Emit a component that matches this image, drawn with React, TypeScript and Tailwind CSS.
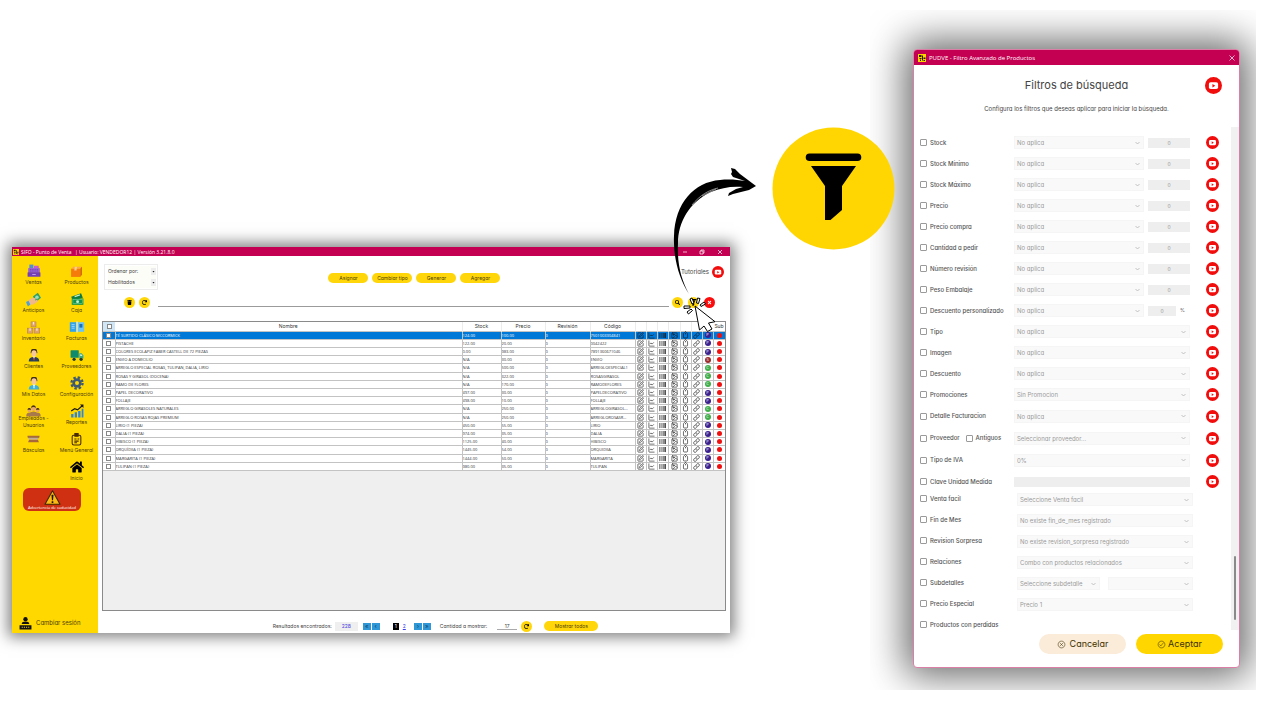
import type { ReactNode } from "react";
import { LuImage, LuSquarePen, LuChartLine, LuTag, LuLink } from "react-icons/lu";
import { FaTrash, FaSearch, FaHome, FaTimes, FaBarcode, FaRedo } from "react-icons/fa";
import { IoCheckmarkCircleOutline, IoCloseCircleOutline } from "react-icons/io5";

// ===== DATA =====

const products = [
  ["TÉ SURTIDO CLÁSICO MCCORMICK", "124.00", "100.00", "7501003304841", "P"],
  ["PISTACHE", "122.00", "20.00", "0042422", "P"],
  ["COLORES ECOLAPIZ FABER CASTELL DE 72 PIEZAS", "0.00", "983.00", "7891360671046", "P"],
  ["ENVIO A DOMICILIO", "N/A", "30.00", "ENVIO", "S"],
  ["ARREGLO ESPECIAL ROSAS, TULIPAN, DALIA, LIRIO", "N/A", "500.00", "ARREGLOESPECIAL1", "C"],
  ["ROSAS Y GIRASOL (DOCENA)", "N/A", "322.00", "ROSASGIRASOL", "C"],
  ["RAMO DE FLORES", "N/A", "170.00", "RAMODEFLORES", "C"],
  ["PAPEL DECORATIVO", "497.00", "30.00", "PAPELDECORATIVO", "P"],
  ["FOLLAJE", "498.00", "10.00", "FOLLAJE", "P"],
  ["ARREGLO GIRASOLES NATURALES", "N/A", "250.00", "ARREGLOGIRASOL...", "C"],
  ["ARREGLO ROSAS ROJAS PREMIUM", "N/A", "250.00", "ARREGLOROSASR...", "C"],
  ["LIRIO (1 PIEZA)", "450.00", "55.00", "LIRIO", "P"],
  ["DALIA (1 PIEZA)", "974.00", "35.00", "DALIA", "P"],
  ["HIBISCO (1 PIEZA)", "1125.00", "40.00", "HIBISCO", "P"],
  ["ORQUÍDEA (1 PIEZA)", "1445.00", "54.00", "ORQUIDEA", "P"],
  ["MARGARITA (1 PIEZA)", "1444.00", "50.00", "MARGARITA", "P"],
  ["TULIPAN (1 PIEZA)", "980.00", "35.00", "TULIPAN", "P"],
];

const typeColors: Record<string, string> = {
  P: "bg-[#3b1f8f]",
  S: "bg-[#9c2b2b]",
  C: "bg-[#3fae49]",
};

const numericFilters = [
  "Stock",
  "Stock Mínimo",
  "Stock Máximo",
  "Precio",
  "Precio compra",
  "Cantidad a pedir",
  "Número revisión",
  "Peso Embalaje",
];

// ===== SIDEBAR ICONS =====

function VentasIcon() {
  return (
    <svg viewBox="0 0 24 24" className="size-[14px]">
      <rect x="4" y="1" width="7" height="7" fill="#4f8fd8" />
      <rect x="12" y="3" width="8" height="5" fill="#c75ad0" />
      <rect x="2" y="7" width="20" height="8" rx="1" fill="#9a62d6" />
      <rect x="1" y="14" width="22" height="8" rx="1" fill="#7440b4" />
      <path d="M5 9.500h14M5 12h14" stroke="#5c35a0" strokeWidth="1" strokeDasharray="2 1" />
      <path d="M9 18h6" stroke="#c9a8ef" strokeWidth="1.500" />
    </svg>
  );
}

function ProductosIcon() {
  return (
    <svg viewBox="0 0 24 24" className="size-[13px]">
      <path d="M2 7l4-4h16l-3 4z" fill="#ffa54a" />
      <rect x="2" y="7" width="17" height="15" fill="#f57c0a" />
      <path d="M19 7l3-4v15l-3 4z" fill="#d45d05" />
      <path d="M9 3h4l-1 7H8z" fill="#ffd08a" />
    </svg>
  );
}

function AnticiposIcon() {
  return (
    <svg viewBox="0 0 24 24" className="size-[15px]">
      <path d="M11 7l8-6 5 8-8 7z" fill="#2f9e6b" />
      <circle cx="17.500" cy="8.500" r="2.800" fill="#9be0b8" />
      <path d="M3 14l7-5 6 1-2 4 4-2 1 3-7 5H7l-3 2z" fill="#f0b98a" />
      <path d="M0 16l4-2 3 6-4 3z" fill="#4f9fd6" />
    </svg>
  );
}

function CajaIcon() {
  return (
    <svg viewBox="0 0 24 24" className="size-[14px]">
      <path d="M2 8l17-6 3 8-17 5z" fill="#0f7a3f" />
      <rect x="3" y="11" width="20" height="11" fill="#12924a" />
      <rect x="5" y="13" width="16" height="7" fill="none" stroke="#7ed19c" />
      <circle cx="13" cy="16.500" r="2.500" fill="#c6f0d2" />
      <path d="M8 8l9-3" stroke="#c6f0d2" strokeWidth="2" />
    </svg>
  );
}

function InventarioIcon() {
  return (
    <svg viewBox="0 0 24 24" className="size-[15px]">
      <g fill="#e0a468" stroke="#b07a45" strokeWidth=".8">
        <rect x="8" y="3" width="8" height="8" />
        <rect x="2" y="13" width="9" height="8" />
        <rect x="13" y="13" width="9" height="8" />
      </g>
      <path d="M11 3h2v4h-2zM5.500 13h2v4h-2zM16.500 13h2v4h-2z" fill="#f9ead4" />
    </svg>
  );
}

function FacturasIcon() {
  return (
    <svg viewBox="0 0 24 20" className="h-[12px] w-[16px]">
      <rect x="0" y="2" width="11" height="16" fill="#35a3e8" />
      <rect x="13" y="2" width="11" height="16" fill="#6cc4f5" />
      <path d="M11 1h2v18h-2z" fill="#d7f0fd" />
      <path d="M3 6h5M3 9h5M3 12h5" stroke="#dff3fd" />
      <path d="M16 5h5v6h-5z" fill="#1d6fb0" />
    </svg>
  );
}

function PersonIcon({ shirt, tie }: { shirt: string; tie: string }) {
  return (
    <svg viewBox="0 0 24 24" className="size-[14px]">
      <path d="M6.500 9c-2-10 13-10 11 0z" fill="#3a2a20" />
      <ellipse cx="12" cy="9" rx="4.500" ry="5.500" fill="#f6c79b" />
      <path d="M7 6c2-3 8-3 10 0l-1-4H8z" fill="#3a2a20" />
      <path d="M3 23c0-6 4-7.500 9-7.500s9 1.500 9 7.500z" fill={shirt} />
      <path d="M9.500 14.500h5L12 19z" fill="#fff" />
      <path d="M11.300 16h1.400l.6 4-1.300 2-1.300-2z" fill={tie} />
    </svg>
  );
}

function ProveedoresIcon() {
  return (
    <svg viewBox="0 0 24 22" className="h-[13px] w-[14px]">
      <rect x="1" y="2" width="14" height="13" rx="1" fill="#0e8a6c" />
      <path d="M16 7h4l3 4v5h-7z" fill="#35a88a" />
      <circle cx="7" cy="17.500" r="2.800" fill="#203b36" />
      <circle cx="19" cy="17.500" r="2.800" fill="#203b36" />
      <path d="M17.500 9h2l2 3h-4z" fill="#cdeee6" />
    </svg>
  );
}

function ConfiguracionIcon() {
  return (
    <svg viewBox="0 0 24 24" className="size-[14px]">
      <circle cx="12" cy="12" r="8" fill="#3f5a73" />
      <circle cx="12" cy="12" r="9.500" fill="none" stroke="#3f5a73" strokeWidth="4" strokeDasharray="4.200 3.260" />
      <circle cx="12" cy="12" r="3.500" fill="#ffd800" />
    </svg>
  );
}

function EmpleadosIcon() {
  return (
    <svg viewBox="0 0 24 20" className="h-[12px] w-[15px]">
      <g fill="#e8a56e">
        <circle cx="5" cy="9" r="3" />
        <circle cx="19" cy="9" r="3" />
        <circle cx="12" cy="6" r="4" />
      </g>
      <path d="M8 5c0-6 8-6 8 0-2-2-6-2-8 0zM2 8c0-4 6-4 6 0zM16 8c0-4 6-4 6 0z" fill="#4a3020" />
      <path d="M0 19c0-6 3-6 5-6s4-2 7-2 5 2 7 2 5 0 5 6z" fill="#a8794a" />
    </svg>
  );
}

function ReportesIcon() {
  return (
    <svg viewBox="0 0 24 24" className="size-[14px]">
      <path d="M2 17h4v6H2zM8 14h4v9H8zM14 12h4v11h-4zM20 8h3v15h-3z" fill="#2f86d8" />
      <path d="M2 12l6-4 5 2 8-7" fill="none" stroke="#161616" strokeWidth="2" />
      <path d="M17 1h6v6z" fill="#161616" />
    </svg>
  );
}

function BasculasIcon() {
  return (
    <svg viewBox="0 0 24 14" className="h-[8px] w-[13px]">
      <path d="M1 1h22v3H1zM4 8h16l2 5H2z" fill="#a8683c" />
      <path d="M3 4h18v4H3z" fill="#c9b4a4" />
      <path d="M2 4.500h20" stroke="#70452a" />
    </svg>
  );
}

function MenuIcon() {
  return (
    <svg viewBox="0 0 24 24" className="size-[13px]" fill="none" stroke="#4a2c00" strokeWidth="2">
      <rect x="4" y="4" width="16" height="18" rx="3" />
      <path d="M9 1h6v5H9z" fill="#4a2c00" />
      <path d="M8 11h4M8 15h8M8 18h5M14 11h3" />
    </svg>
  );
}

const menuItems: { label: string; icon: ReactNode }[] = [
  { label: "Ventas", icon: <VentasIcon /> },
  { label: "Productos", icon: <ProductosIcon /> },
  { label: "Anticipos", icon: <AnticiposIcon /> },
  { label: "Caja", icon: <CajaIcon /> },
  { label: "Inventario", icon: <InventarioIcon /> },
  { label: "Facturas", icon: <FacturasIcon /> },
  { label: "Clientes", icon: <PersonIcon shirt="#24405c" tie="#c0392b" /> },
  { label: "Proveedores", icon: <ProveedoresIcon /> },
  { label: "Mis Datos", icon: <PersonIcon shirt="#3fb1d6" tie="#bfe8f5" /> },
  { label: "Configuración", icon: <ConfiguracionIcon /> },
  { label: "Empleados - Usuarios", icon: <EmpleadosIcon /> },
  { label: "Reportes", icon: <ReportesIcon /> },
  { label: "Básculas", icon: <BasculasIcon /> },
  { label: "Menú General", icon: <MenuIcon /> },
];

// ===== SHARED PIECES =====

function AppLogo({ className }: { className: string }) {
  return (
    <svg viewBox="0 0 16 16" className={className}>
      <rect width="16" height="16" fill="#ffd500" />
      <path d="M2 2h5v4H2zM8 3h2v10H8zM3 8h4v2H3zM11 7h4v3h-4zM11 12h3v2h-3zM4 11h2v3H4z" fill="#2b1a00" />
    </svg>
  );
}

function VideoIcon({ className }: { className: string }) {
  return (
    <svg viewBox="0 0 24 24" className={className}>
      <circle cx="12" cy="12" r="12" fill="#f20d0d" />
      <rect x="5.500" y="7.500" width="13" height="9.500" rx="2.500" fill="#fff" />
      <path d="M10.500 9.800v5l4-2.500z" fill="#f20d0d" />
    </svg>
  );
}

function Chevron() {
  return (
    <svg
      viewBox="0 0 10 6"
      className="pointer-events-none absolute right-1 top-1/2 h-[3px] w-[5px] -translate-y-1/2"
      fill="none"
      stroke="#b5b5b5"
      strokeWidth="1.600"
    >
      <path d="M1 1l4 4 4-4" />
    </svg>
  );
}

function FilterSelect({ label, value, className = "" }: { label: string; value: string; className?: string }) {
  return (
    <div className={`relative ${className}`}>
      <select
        aria-label={label}
        className="block h-[13px] w-full appearance-none border border-[#f5f5f5] bg-[#f9f9f9] px-[2px] text-[6px] leading-[11px] text-[#9a9a9a]"
      >
        <option>{value}</option>
      </select>
      <Chevron />
    </div>
  );
}

function Tick({ label }: { label: string }) {
  return (
    <label className="flex items-center gap-[3px] whitespace-nowrap text-[6px] leading-[8px] font-medium text-[#555]">
      <input
        type="checkbox"
        className="size-[7px] shrink-0 appearance-none rounded-[1px] border border-[#9a9a9a] bg-white"
      />
      {label}
    </label>
  );
}

// ===== PRODUCTS WINDOW =====

function Sidebar() {
  return (
    <nav className="flex w-[86px] shrink-0 flex-col bg-[#ffd800] pt-[8px] text-[#4d4100]">
      <div className="grid grid-cols-2">
        {menuItems.map((item) => (
          <a key={item.label} href="#" className="flex h-[28px] flex-col items-center">
            <span className="flex h-[14px] items-center">{item.icon}</span>
            <span
              className={
                item.label.startsWith("Empleados")
                  ? "-mt-[3px] w-[34px] text-center text-[5px] leading-[7px]"
                  : "mt-[1px] whitespace-nowrap text-[5px] leading-[7px]"
              }
            >
              {item.label}
            </span>
          </a>
        ))}
        <a href="#" className="col-start-2 flex h-[28px] flex-col items-center">
          <FaHome className="size-[14px] text-black" />
          <span className="mt-[1px] text-[5px] leading-[7px]">Inicio</span>
        </a>
      </div>
      <button className="ml-[11px] flex h-[23px] w-[58px] flex-col items-center rounded-[6px] bg-[#d03012] pt-[2px] font-['Open_Sans',sans-serif] text-[4px] leading-[5px] text-white">
        <svg viewBox="0 0 24 22" className="h-[15px] w-[17px] shrink-0">
          <path d="M12 1l11 20H1z" fill="#fdb913" stroke="#3b2500" strokeWidth="1.500" strokeLinejoin="round" />
          <path d="M10.500 7h3l-.7 8h-1.600zM10.800 16.500h2.400v2.400h-2.400z" fill="#1a1200" />
        </svg>
        Advertencia de caducidad
      </button>
      <button className="mt-auto flex items-center gap-1 pb-[3px] pl-[7px] text-[6px] leading-[14px]">
        <svg viewBox="0 0 24 24" className="size-[13px]" fill="#111">
          <circle cx="12" cy="4" r="4" />
          <path d="M5 13c0-6 14-6 14 0zM1 15h22v8H1z" />
          <path d="M5 18h2v2H5zM9 18h2v2H9zM13 18h2v2h-2zM17 18h2v2h-2z" fill="#ffd800" />
        </svg>
        Cambiar sesión
      </button>
    </nav>
  );
}

function RoundButton({ label, children, red = false }: { label: string; children: ReactNode; red?: boolean }) {
  return (
    <button
      aria-label={label}
      className={`flex size-[11px] shrink-0 items-center justify-center rounded-full ${
        red ? "bg-[#fb0d0d] text-white" : "bg-[#ffd60a] text-black"
      }`}
    >
      {children}
    </button>
  );
}

const actionIcons = [
  { Icon: LuSquarePen, className: "size-[7px]" },
  { Icon: LuChartLine, className: "size-[7px]" },
  { Icon: FaBarcode, className: "size-[7px]" },
  { Icon: LuImage, className: "size-[7px]" },
  { Icon: LuTag, className: "size-[7px] rotate-45" },
  { Icon: LuLink, className: "size-[7px]" },
];

function ProductsTable() {
  return (
    <div className="min-h-0 flex-1 border border-[#8a8a8a] bg-[#efefef]">
      <table className="h-[149px] w-full table-fixed border-collapse bg-white font-['Open_Sans',sans-serif] text-[4px] leading-[5px] text-[#333]">
        <colgroup>
          <col className="w-[12px]" />
          <col />
          <col className="w-[39px]" />
          <col className="w-[44px]" />
          <col className="w-[45px]" />
          <col className="w-[45px]" />
          <col className="w-[11px]" />
          <col className="w-[11px]" />
          <col className="w-[11px]" />
          <col className="w-[12px]" />
          <col className="w-[11px]" />
          <col className="w-[11px]" />
          <col className="w-[11px]" />
          <col className="w-[12px]" />
        </colgroup>
        <thead>
          <tr className="h-[9px] font-['Inter',sans-serif] text-[5px]">
            <th className="bg-[#cfe6f7] p-0">
              <input
                type="checkbox"
                aria-label="Seleccionar todos"
                className="mx-auto block size-[5px] appearance-none border border-[#888] bg-white"
              />
            </th>
            {["Nombre", "Stock", "Precio", "Revisión", "Código"].map((name) => (
              <th key={name} className="border-r border-[#ececec] p-0 font-normal">
                {name}
              </th>
            ))}
            {actionIcons.map((_, i) => (
              <th key={i} className="border-r border-[#ececec] p-0" />
            ))}
            <th className="p-0" />
            <th className="p-0 font-normal">Sub</th>
          </tr>
        </thead>
        <tbody>
          {products.map(([name, stock, price, code, type], row) => (
            <tr key={code} className={row === 0 ? "bg-[#0078d7] text-white" : ""}>
              <td className="border border-l-0 border-[#c3c3c3] p-0">
                <input
                  type="checkbox"
                  aria-label={name}
                  className="mx-auto block size-[5px] appearance-none border border-[#888] bg-white"
                />
              </td>
              {[name, stock, price, "0", code].map((text, i) => (
                <td key={i} className="overflow-hidden whitespace-nowrap border border-[#c3c3c3] p-0">
                  {text}
                </td>
              ))}
              {actionIcons.map(({ Icon, className }, i) => (
                <td key={i} className="border border-[#c3c3c3] p-0 text-[#111]">
                  <Icon className={`mx-auto block ${className}`} />
                </td>
              ))}
              <td className="border border-[#c3c3c3] p-0">
                <span
                  className={`mx-auto flex size-[6px] items-center justify-center rounded-full text-[4px] leading-[6px] text-white ${typeColors[type]}`}
                >
                  {type}
                </span>
              </td>
              <td className="border border-r-0 border-[#c3c3c3] p-0">
                <span className="mx-auto block size-[5px] rounded-full bg-[#f01010]" />
              </td>
            </tr>
          ))}
        </tbody>
      </table>
    </div>
  );
}

function Pagination() {
  const arrow = "flex h-[7px] w-[8px] items-center justify-center bg-[#2f97d6] text-[6px] leading-[6px] text-[#0b3e66]";
  return (
    <div className="flex h-[22px] items-center justify-center pl-[43px] pt-[8px] text-[5px] leading-[7px] text-[#444]">
      <span className="pr-[3px]">Resultados encontrados:</span>
      <output className="mr-[5px] block h-[9px] w-[23px] bg-[#efefef] text-center leading-[9px] text-[#4a3fe0]">
        228
      </output>
      <div className="flex gap-px">
        <button className={arrow}>«</button>
        <button className={arrow}>‹</button>
      </div>
      <button className="ml-[13px] h-[7px] w-[6px] bg-black text-white">1</button>
      <a href="#" className="mx-[4px] text-[#3d3df0] underline">
        2
      </a>
      <div className="ml-[4px] flex gap-px">
        <button className={arrow}>›</button>
        <button className={arrow}>»</button>
      </div>
      <label htmlFor="page-size" className="ml-[9px]">
        Cantidad a mostrar:
      </label>
      <input
        id="page-size"
        defaultValue="17"
        className="ml-[10px] mr-[4px] h-[8px] w-[20px] border-b border-[#aaa] text-center"
      />
      <RoundButton label="Actualizar">
        <FaRedo className="size-[5px]" />
      </RoundButton>
      <button className="ml-[12px] h-[10px] w-[54px] rounded-full bg-[#ffd60a] text-[#4d4100]">
        Mostrar todos
      </button>
    </div>
  );
}

function ProductsWindow() {
  return (
    <section className="flex h-[386px] flex-col bg-white shadow-[0_0_14px_4px_rgba(0,0,0,0.5)]">
      <header className="flex h-[9px] shrink-0 items-center bg-[#c30052] font-['Open_Sans',sans-serif] text-[5px] leading-[8px] text-white">
        <AppLogo className="ml-px mr-[2px] size-[6px]" />
        <span className="w-[54px]">SIFO - Punto de Venta</span>
        <span>| Usuario: VENDEDOR12 | Versión 3.21.8.0</span>
        <svg viewBox="0 0 42 6" className="ml-auto mr-[6px] h-[6px] w-[42px]" fill="none" stroke="#fff" strokeWidth=".7">
          <path d="M1 3h4M18 2h3v3h-3zM19 2V1h3v3h-1M36 1l4 4M40 1l-4 4" />
        </svg>
      </header>
      <div className="flex min-h-0 flex-1">
        <Sidebar />
        <div className="flex min-w-0 flex-1 flex-col pl-1 pr-1">
          <div className="mt-[8px] flex h-[26px] items-center pl-[2px]">
            <div className="flex h-full w-[54px] flex-col justify-center border border-[#ececec] pl-[3px]">
              {["Ordenar por:", "Habilitados"].map((text) => (
                <div key={text} className="relative w-[48px]">
                  <select
                    aria-label={text}
                    className="block h-[11px] w-full appearance-none bg-[#fdfdf8] text-[5px] leading-[11px] text-[#444]"
                  >
                    <option>{text}</option>
                  </select>
                  <svg
                    viewBox="0 0 5 7"
                    className="pointer-events-none absolute right-0 top-[2px] h-[7px] w-[5px]"
                  >
                    <rect width="5" height="7" fill="#ededed" />
                    <path d="M1.500 3h2L2.500 4.500z" fill="#222" />
                  </svg>
                </div>
              ))}
            </div>
            <div className="flex flex-1 items-center justify-center gap-[4px] pr-[10px] pt-[2px]">
              {["Asignar", "Cambiar tipo", "Generar", "Agregar"].map((text) => (
                <button
                  key={text}
                  className="h-[10px] w-[40px] rounded-full bg-[#ffd60a] text-[5px] leading-[10px] text-[#4d4100]"
                >
                  {text}
                </button>
              ))}
            </div>
            <a href="#" className="mb-[10px] flex items-center gap-[3px] pr-[2px] text-[6px] leading-[8px] text-[#444]">
              Tutoriales
              <VideoIcon className="size-[12px]" />
            </a>
          </div>
          <div className="mt-[7px] flex h-[11px] items-center pl-[22px] pr-[11px]">
            <RoundButton label="Eliminar">
              <FaTrash className="size-[5px]" />
            </RoundButton>
            <span className="w-[4px]" />
            <RoundButton label="Recargar">
              <FaRedo className="size-[5px]" />
            </RoundButton>
            <input
              aria-label="Buscar"
              className="ml-[8px] mr-[3px] h-[9px] min-w-0 flex-1 border-b border-[#9b9b9b] text-[6px]"
            />
            <div className="flex gap-[5px]">
              <RoundButton label="Buscar producto">
                <FaSearch className="size-[5px]" />
              </RoundButton>
              <RoundButton label="Filtrar">
                <svg viewBox="0 0 60 68" className="size-[7px]">
                  <path d="M2 0h56v9H2zM6 13h45L37 34v24L25 67h-5V34z" />
                </svg>
              </RoundButton>
              <RoundButton label="Limpiar" red>
                <FaTimes className="size-[5px]" />
              </RoundButton>
            </div>
          </div>
          <div className="mt-[13px] flex min-h-0 flex-1 flex-col">
            <ProductsTable />
          </div>
          <Pagination />
        </div>
      </div>
    </section>
  );
}

// ===== FILTERS WINDOW =====

function FilterRow({ label, children, video = true, tall = false }: {
  label: string;
  children?: ReactNode;
  video?: boolean;
  tall?: boolean;
}) {
  return (
    <div className={`flex items-center ${tall ? "h-[22px]" : "h-[21px]"}`}>
      <div className="flex w-[94px] shrink-0 gap-[6px]">
        <Tick label={label} />
        {label === "Proveedor" && <Tick label="Antiguos" />}
      </div>
      <div className="flex min-w-0 flex-1 items-center gap-[4px]">{children}</div>
      <div className="ml-[16px] w-[13px] shrink-0">
        {video && <VideoIcon className="size-[13px]" />}
      </div>
    </div>
  );
}

function FiltersWindow() {
  return (
    <section className="flex h-[619px] flex-col overflow-hidden rounded-[4px] border border-[#dc7fa6] bg-white shadow-[0_0_38px_8px_rgba(0,0,0,0.6)]">
      <header className="flex h-[15px] shrink-0 items-center bg-[#c30052] px-[4px] font-['Open_Sans',sans-serif] text-[6px] leading-[8px] text-white">
        <AppLogo className="mr-[3px] size-[8px]" />
        PUDVE - Filtro Avanzado de Productos
        <button aria-label="Cerrar" className="ml-auto">
          <svg viewBox="0 0 6 6" className="size-[6px]" fill="none" stroke="#fff" strokeWidth=".7">
            <path d="M.5 .5l5 5M5.500 .5l-5 5" />
          </svg>
        </button>
      </header>
      <div className="relative h-[62px] shrink-0 pt-[13px] text-center text-[#444]">
        <h1 className="text-[11px] leading-[14px]">Filtros de búsqueda</h1>
        <p className="mt-[13px] text-[6px] leading-[8px]">
          Configura los filtros que deseas aplicar para iniciar la búsqueda.
        </p>
        <VideoIcon className="absolute right-[17px] top-[12px] size-[17px]" />
      </div>
      <div className="flex h-[503px] shrink-0">
        <div className="min-w-0 flex-1 pl-[6px] pr-[12px] pt-[5px]">
          {numericFilters.map((label) => (
            <FilterRow key={label} label={label}>
              <FilterSelect label={label} value="No aplica" className="flex-1" />
              <input
                aria-label={`${label} valor`}
                defaultValue="0"
                className="h-[10px] w-[42px] bg-[#eee] text-center text-[5px] leading-[10px] text-[#999]"
              />
            </FilterRow>
          ))}
          <FilterRow label="Descuento personalizado">
            <FilterSelect label="Descuento personalizado" value="No aplica" className="flex-1" />
            <input
              aria-label="Porcentaje"
              defaultValue="0"
              className="h-[10px] w-[28px] bg-[#eee] text-center text-[5px] leading-[10px] text-[#999]"
            />
            <span className="w-[10px] text-[5px] text-[#555]">%</span>
          </FilterRow>
          {["Tipo", "Imagen", "Descuento", "Promociones"].map((label) => (
            <FilterRow key={label} label={label}>
              <FilterSelect
                label={label}
                value={label === "Promociones" ? "Sin Promocion" : "No aplica"}
                className="flex-1"
              />
            </FilterRow>
          ))}
          <FilterRow label="Detalle Facturacion" tall>
            <FilterSelect label="Detalle Facturacion" value="No aplica" className="flex-1" />
          </FilterRow>
          <FilterRow label="Proveedor" tall>
            <FilterSelect label="Proveedor" value="Seleccionar proveedor..." className="flex-1" />
          </FilterRow>
          <FilterRow label="Tipo de IVA" tall>
            <FilterSelect label="Tipo de IVA" value="0%" className="flex-1" />
          </FilterRow>
          <FilterRow label="Clave Unidad Medida">
            <input aria-label="Clave" className="h-[10px] w-full bg-[#eee] text-[5px]" />
          </FilterRow>
          {/* Second block sits a little closer and its fields are shifted right */}
          <div className="-mt-[4px]">
            {[
              ["Venta facil", "Seleccione Venta facil"],
              ["Fin de Mes", "No existe fin_de_mes registrado"],
              ["Revision Sorpresa", "No existe revision_sorpresa registrado"],
              ["Relaciones", "Combo con productos relacionados"],
              ["Subdetalles", "Seleccione subdetalle"],
              ["Precio Especial", "Precio 1"],
            ].map(([label, value]) => (
              <FilterRow key={label} label={label} video={false}>
                <div className="-mr-[3px] ml-[3px] flex flex-1 gap-[8px] pt-[2px]">
                  <FilterSelect
                    label={label}
                    value={value}
                    className={label === "Subdetalles" ? "w-[83px]" : "flex-1"}
                  />
                  {label === "Subdetalles" && (
                    <FilterSelect label="Subdetalle" value="" className="flex-1" />
                  )}
                </div>
              </FilterRow>
            ))}
            <FilterRow label="Productos con perdidas" video={false} />
          </div>
        </div>
        <div className="flex w-[8px] shrink-0 justify-center bg-[#f1f1f1] pt-[429px]">
          <div className="h-[64px] w-[2px] rounded-full bg-[#8a8a8a]" />
        </div>
      </div>
      <footer className="flex justify-end gap-[10px] pr-[16px] pt-[4px] text-[9px] leading-[20px] text-[#3c3200]">
        <button className="flex h-[20px] w-[87px] items-center justify-center gap-[4px] rounded-full bg-[#fbebd9]">
          <IoCloseCircleOutline className="size-[9px]" />
          Cancelar
        </button>
        <button className="flex h-[20px] w-[87px] items-center justify-center gap-[2px] rounded-full bg-[#ffd600]">
          <IoCheckmarkCircleOutline className="size-[9px]" />
          Aceptar
        </button>
      </footer>
    </section>
  );
}

// ===== PAGE =====

export default function App() {
  return (
    <main className="relative grid min-h-screen grid-cols-[minmax(0,718fr)_minmax(0,140fr)_minmax(0,386fr)] overflow-hidden bg-white pl-[12px] pr-[24px] pt-[10px] font-['Inter',sans-serif] [font-feature-settings:'cv11']">
      <div className="relative z-10 pt-[237px]">
        <ProductsWindow />
        {/* Hand-drawn arrow and click cursor over the window's filter button */}
        <svg
          viewBox="0 0 100 180"
          className="pointer-events-none absolute -right-[35px] top-[150px] h-[180px] w-[100px]"
        >
          <path
            d="M24 134C14 119 8 97 9 76C10 43 29 22 55 20C65 19 73 20 80 21L68 17L66 14L67 12L66 8L70 9L75 14L91 26L84 30L68 34L63 36L64 33L71 29L78 27C66 26 56 28 46 32C24 42 13 63 13 83C12 104 16 119 24 134Z"
            fill="#000"
          />
          <path d="M27 45C35 35 44 30 53 28M37 36L51 29" fill="none" stroke="#ddd" strokeWidth=".6" />
          <g fill="#fff" stroke="#000" strokeWidth="1" strokeLinejoin="round">
            <path d="M30 146L50 161.700L43.500 163L47 169L42.500 171.500L39 166L34.500 170Z" />
            <path d="M27 144l-2-5 2-1 2 5zM31.500 143l1-5 2.500 .5-1.500 5zM35 145l4-3 1.500 2-4.500 2.500zM25 146l-6 0v2.500l6-.5zM26 149l-4 3 1.500 2 4-3.500z" />
          </g>
        </svg>
      </div>
      <div className="relative z-10 pl-[42px] pt-[117px]">
        <svg viewBox="0 0 123 123" className="size-[123px]">
          <circle cx="61.500" cy="61.500" r="61" fill="#ffd602" />
          <path d="M37.500 26.500h48a3.800 3.800 0 0 1 0 7.600h-48a3.800 3.800 0 0 1 0-7.600zM39 39h45L70 59v24L58.500 93H53V59z" />
        </svg>
      </div>
      <div className="h-[680px] overflow-hidden pl-[43px] pr-[16px] pt-[39px]">
        <FiltersWindow />
      </div>
    </main>
  );
}
